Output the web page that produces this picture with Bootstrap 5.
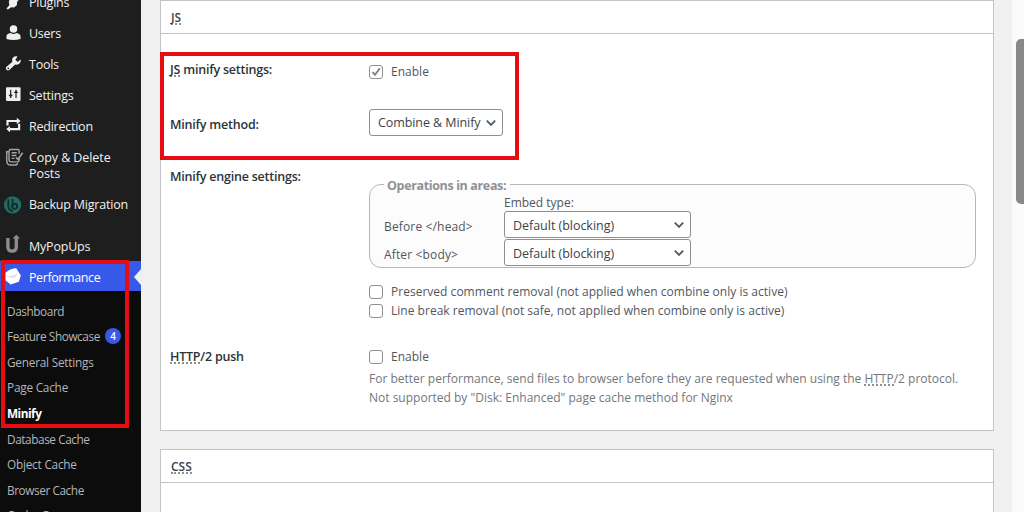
<!DOCTYPE html>
<html lang="en">
<head>
<meta charset="utf-8">
<meta name="viewport" content="width=device-width, initial-scale=1">
<title>Performance – Minify</title>
<link href="https://cdn.jsdelivr.net/npm/bootstrap@5.3.0/dist/css/bootstrap.min.css" rel="stylesheet">
<style>
body{height:512px;overflow:hidden;background:#f0f0f1;color:#50575e;font-family:"Open Sans","Noto Sans",sans-serif;font-size:12px;line-height:16px}
.sidebar{width:141px;height:512px;background:#1e1e1e;color:#f0f0f1}
.menu-top{margin-top:-13px}
.menu-item{height:31px;padding-left:5px;font-size:12.5px;letter-spacing:-.24px;color:#f0f0f1;text-decoration:none;white-space:nowrap}
.menu-item svg{width:15px;height:15px;margin:-3px 8px 0 1px;flex:none;overflow:visible}
.menu-item.two-line{height:47px;letter-spacing:-.08px}
.menu-item.two-line svg{margin-top:7px}
.menu-item.wide-text{letter-spacing:-.2px}
.menu-item.gap-above{height:33px;margin-top:8px;padding-top:5px}
.menu-item.current{height:30px;padding-top:3px;background:#3858e9;color:#fff;letter-spacing:-.4px}
.pointer{right:0;top:8px;border:8px solid transparent;border-left:0;border-right:7px solid #f0f0f1}
.submenu{background:#0c0c0c;padding-top:6.8px;height:222px}
.submenu a{height:25.6px;padding-left:7px;color:#b4b6b9;font-size:11.8px;letter-spacing:-.42px;text-decoration:none;white-space:nowrap}
.submenu a.spread{letter-spacing:-.22px}
.submenu a.chosen{color:#fff;font-weight:700;letter-spacing:-.5px}
.count{width:16px;height:16px;margin-left:5px;background:#3858e9;color:#fff;font-size:10px;font-weight:600}
.mark-box{border:4px solid #e60c10;pointer-events:none}
.mark-menu{left:1px;top:260px;width:128px;height:168px}
.mark-js{left:-1px;top:51px;width:359px;height:108px}
.content-area{height:512px;padding:0 18px 0 19px}
.panel{background:#fff;border:1px solid #c3c4c7}
.panel-js{height:431px}
.panel-css{height:90px;margin-top:18px}
.panel-title{height:33px;padding:3px 0 0 10px;border-bottom:1px solid #c3c4c7;font-size:12px;font-weight:600;color:#3c434a}
abbr[title]{text-decoration:none;border-bottom:2px dotted #8c9094;cursor:help;display:inline-block;line-height:11px}
.label-col{width:208px;padding-left:9px;font-weight:600;font-size:12.5px;letter-spacing:-.22px;color:#2c3338;flex:none}
.line-enable{height:53px;padding-top:28px}
.line-enable .fit{height:20px;margin-top:-2px}
.line-method{height:83px;padding-top:21px}
.line-method .label-col{padding-top:9px}
.line-engine{height:176px;padding-top:13px}
.line-engine .label-col{margin-top:-14px}
.line-push{height:80px;padding-top:2px}
.line-push .label-col{padding-top:1px}
.tick{width:14px;height:14px;margin:0 8px 0 0;border:1px solid #8c8f94;border-radius:3px;background:#fff;flex:none}
.tick svg{width:12px;height:12px;display:block}
.picker{height:27px;border:1px solid #8c8f94;border-radius:3px;background:#fff;color:#3c434a;padding:1px 6px 0 8px;font-size:12.5px;letter-spacing:-.03px;white-space:nowrap}
.picker svg{width:10px;height:6px}
.picker-method{width:134px;margin:1px 0 0;letter-spacing:-.08px}
.picker-embed{width:187px;margin-bottom:1px}
.picker-embed span{padding-top:1px}
.area-stack{margin-top:-6px}
.areas{width:607px;height:92px;border:1px solid #b6b7ba;border-radius:12px;background:#fcfcfc;margin:-1px 0 0;padding:0 14px;min-width:0}
.areas legend{float:none;width:auto;height:16px;margin:0;padding:2px 4px 0 3px;font-size:12.5px;line-height:16px;font-weight:700;letter-spacing:-.36px;color:#8f9194}
.embed-head{height:19px;padding:3px 0 0 120px}
.area-name{width:120px;padding-top:4px;flex:none}
.fit{font-size:12px;letter-spacing:.02px;white-space:nowrap}
.area-name.fit{letter-spacing:.15px}
.check-row{height:18.500px}
.check-first{margin-top:15px}
.hint{padding-top:2px;color:#72777c;line-height:19.5px;white-space:nowrap;letter-spacing:0}
.scroll-rail{width:12px;background:#fbfbfb;padding:39px 0 0 4px;overflow:hidden}
.scroll-thumb{width:12px;height:165px;border-radius:5px;background:#898989}
</style>
</head>
<body>
<div class="d-flex position-relative">
  <nav class="sidebar overflow-hidden flex-shrink-0">
    <div class="menu-top d-flex flex-column">
      <a class="menu-item d-flex align-items-center"><svg viewBox="0 0 16 16" fill="#f0f0f1"><path d="M6 1h9l-2 3 2 1-3 3-.5 4-3 2.500-3-.5L2 16.500.5 15.500 3.500 12 3 8z"/></svg>Plugins</a>
      <a class="menu-item d-flex align-items-center"><svg viewBox="0 0 16 16" fill="#f0f0f1"><circle cx="8" cy="4.2" r="4"/><path d="M.5 15V11.700C.8 9.500 4 8.600 5 8.600Q8 10.800 11 8.600C12 8.600 15.200 9.500 15.500 11.700V15Q8 17 .5 15z"/></svg>Users</a>
      <a class="menu-item d-flex align-items-center"><svg viewBox="0 0 16 16" fill="#f0f0f1"><path d="M15.600 3.800l-3.200 2.500-2.400-2.400 2.200-3.200C9.500-.4 6.500 1.500 6.500 4.300c0 .8.100 1.200.3 1.700L.3 11.800c-1.500 1.600.9 4.900 3.200 3.200L9.800 9c3.700 1.200 6.600-2.200 5.800-5.200zM2.400 14a.9.9 0 110-1.800.9.9 0 010 1.800z"/></svg>Tools</a>
      <a class="menu-item d-flex align-items-center"><svg viewBox="0 0 16 16"><rect x="0" y=".3" width="15.500" height="14.500" rx="1" fill="#f0f0f1"/><path d="M5 2.800v9M10.700 2.800v9" stroke="#1e1e1e" stroke-width="1.300"/><path d="M2.500 8.300h5L5 10.800zM8.200 6.300h5L10.700 3.800z" fill="#1e1e1e"/></svg>Settings</a>
      <a class="menu-item d-flex align-items-center"><svg viewBox="0 0 16 16" fill="none" stroke="#f0f0f1" stroke-width="2.300"><path d="M1.600 8V3.200H12M14 6v5.800H4"/><path d="M11.500-.2l4 3.400-4 3.400zM4.300 8.400l-4 3.400 4 3.400z" fill="#f0f0f1" stroke="none"/></svg>Redirection</a>
      <a class="menu-item two-line d-flex align-items-start"><svg viewBox="0 0 16 16" fill="none" stroke="#a3a5a8" stroke-width="1.500"><path d="M3 3H.8v9q0 5 3.500 5h6q2 0 2-2"/><path d="M14 5V1.800q0-1.300-1-1.300H5q-1.800 0-1.800 1.800v9q0 2.400 2 2.400H12q2 0 2-2.400V9"/><path d="M6 4h5.500M6 7h5M6 10h3"/><path d="M10.500 9l2.300 2 5-7" stroke-width="1.700"/></svg><span class="pt-2">Copy &amp; Delete<br>Posts</span></a>
      <a class="menu-item wide-text d-flex align-items-center"><svg viewBox="0 0 16 16" fill="none"><circle cx="7" cy="9.500" r="9.200" fill="#246b62"/><path d="M2.500 3.500V11q.5 4.500 5 5M7 3V12" stroke="#102f2d" stroke-width="2"/><circle cx="9.200" cy="11" r="2.700" stroke="#102f2d" stroke-width="2"/></svg>Backup Migration</a>
      <a class="menu-item wide-text gap-above d-flex align-items-center"><svg viewBox="0 0 16 16" fill="none" stroke="#8b8d90" stroke-width="3.600"><path d="M2 0v9Q2 14 6.500 14T11 9V-1"/><path d="M7 .5l4-4L15 .5z" fill="#8b8d90" stroke="none"/></svg>MyPopUps</a>
      <a class="menu-item current position-relative d-flex align-items-center"><svg viewBox="0 0 16 16"><path d="M-.5 4Q3 .5 8-.6L11-.8 15.800 7 13.700 13.500 5 16.500-.5 12z" fill="#fff"/><path d="M.8 7l3.500 1.500L12 6M5.500 9.500l5-1.500" stroke="#cfd6ef" stroke-width="1" fill="none"/></svg>Performance<span class="pointer position-absolute"></span></a>
    </div>
    <div class="submenu d-flex flex-column">
      <a class="d-flex align-items-center flex-shrink-0">Dashboard</a>
      <a class="d-flex align-items-center flex-shrink-0">Feature Showcase<span class="count rounded-circle d-flex align-items-center justify-content-center">4</span></a>
      <a class="spread d-flex align-items-center flex-shrink-0">General Settings</a>
      <a class="spread d-flex align-items-center flex-shrink-0">Page Cache</a>
      <a class="chosen d-flex align-items-center flex-shrink-0">Minify</a>
      <a class="d-flex align-items-center flex-shrink-0">Database Cache</a>
      <a class="spread d-flex align-items-center flex-shrink-0">Object Cache</a>
      <a class="d-flex align-items-center flex-shrink-0">Browser Cache</a>
      <a class="d-flex align-items-center flex-shrink-0">Cache Groups</a>
    </div>
  </nav>
  <main class="content-area flex-grow-1 overflow-hidden">
    <section class="panel panel-js position-relative">
      <div class="panel-title d-flex align-items-center"><abbr title="JavaScript">JS</abbr></div>
      <div class="line-enable d-flex">
        <div class="label-col"><abbr title="JavaScript">JS</abbr> minify settings:</div>
        <label class="d-flex align-items-center pt-1 fit"><span class="tick"><svg viewBox="0 0 12 12"><path d="M2.500 6.200l2.500 2.600 4.800-6.500" fill="none" stroke="#7d8186" stroke-width="1.800"/></svg></span>Enable</label>
      </div>
      <div class="line-method d-flex">
        <div class="label-col">Minify method:</div>
        <div class="picker picker-method d-flex align-items-center justify-content-between ms-0"><span>Combine &amp; Minify</span><svg viewBox="0 0 10 6"><path d="M.8.700L5 4.900 9.200.700" fill="none" stroke="#50575e" stroke-width="1.800"/></svg></div>
      </div>
      <div class="line-engine d-flex">
        <div class="label-col">Minify engine settings:</div>
        <div class="area-stack">
          <fieldset class="areas">
            <legend>Operations in areas:</legend>
            <div class="embed-head">Embed type:</div>
            <div class="d-flex align-items-center"><span class="area-name fit">Before &lt;/head&gt;</span><div class="picker picker-embed d-flex align-items-center justify-content-between"><span>Default (blocking)</span><svg viewBox="0 0 10 6"><path d="M.8.700L5 4.900 9.200.700" fill="none" stroke="#50575e" stroke-width="1.800"/></svg></div></div>
            <div class="d-flex align-items-center"><span class="area-name fit">After &lt;body&gt;</span><div class="picker picker-embed d-flex align-items-center justify-content-between"><span>Default (blocking)</span><svg viewBox="0 0 10 6"><path d="M.8.700L5 4.900 9.200.700" fill="none" stroke="#50575e" stroke-width="1.800"/></svg></div></div>
          </fieldset>
          <label class="check-row check-first d-flex align-items-center fit"><span class="tick"></span>Preserved comment removal (not applied when combine only is active)</label>
          <label class="check-row d-flex align-items-center fit"><span class="tick"></span>Line break removal (not safe, not applied when combine only is active)</label>
        </div>
      </div>
      <div class="line-push d-flex">
        <div class="label-col"><abbr title="Hypertext Transfer Protocol">HTTP</abbr>/2 push</div>
        <div>
          <label class="check-row d-flex align-items-center fit"><span class="tick"></span>Enable</label>
          <p class="hint m-0">For better performance, send files to browser before they are requested when using the <abbr title="Hypertext Transfer Protocol">HTTP</abbr>/2 protocol.<br>Not supported by "Disk: Enhanced" page cache method for Nginx</p>
        </div>
      </div>
      <div class="mark-box mark-js position-absolute"></div>
    </section>
    <section class="panel panel-css">
      <div class="panel-title d-flex align-items-center"><abbr title="Cascading Style Sheet">CSS</abbr></div>
    </section>
  </main>
  <div class="scroll-rail flex-shrink-0"><div class="scroll-thumb"></div></div>
  <div class="mark-box mark-menu position-absolute"></div>
</div>
<script src="https://cdn.jsdelivr.net/npm/bootstrap@5.3.0/dist/js/bootstrap.bundle.min.js"></script>
</body>
</html>
